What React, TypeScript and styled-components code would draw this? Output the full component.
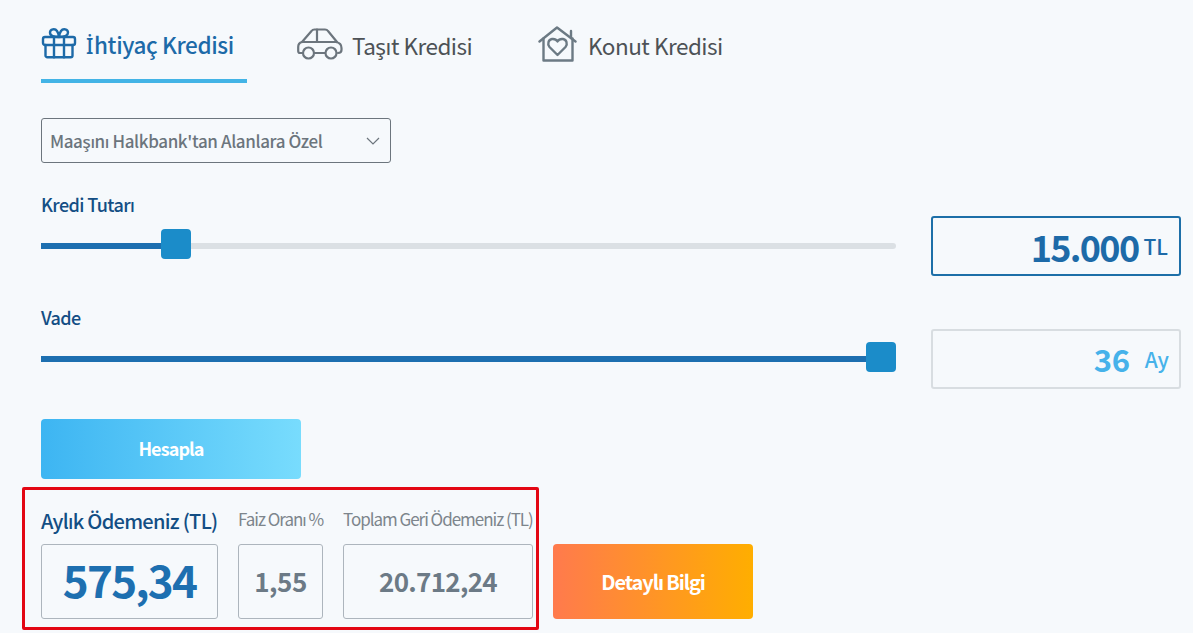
import React from "react";
import styled, { createGlobalStyle } from "styled-components";

const Global = createGlobalStyle`
  html, body { margin: 0; padding: 0; background: #f6f9fc; }
  body { font-family: "Noto Sans CJK SC", "Noto Sans", sans-serif; }
`;

const Page = styled.div`
  width: 1193px;
  height: 633px;
  box-sizing: border-box;
  padding-left: 41px;
  overflow: hidden;
`;

const Tabs = styled.nav`
  display: flex;
  height: 83px;
`;

const Tab = styled.div<{ $active?: boolean; $width: number; $inset?: number }>`
  display: flex;
  align-items: center;
  gap: 9px;
  box-sizing: border-box;
  width: ${(p) => p.$width}px;
  height: 83px;
  padding: 26px 0 15px ${(p) => p.$inset ?? 0}px;
  font-size: 22.500px;
  line-height: 30px;
  letter-spacing: ${(p) => (p.$active ? -0.4 : -0.5)}px;
  font-weight: ${(p) => (p.$active ? 500 : 400)};
  color: ${(p) => (p.$active ? "#1d6aa8" : "#4d5256")};
  border-bottom: 4px solid ${(p) => (p.$active ? "#43b4e6" : "transparent")};
`;

const TabLabel = styled.span`
  white-space: nowrap;
`;

const DottedCapital = styled.span`
  font-family: "Noto Sans", sans-serif;
  font-size: 21px;
  margin-right: 1px;
`;

const SelectBox = styled.div`
  display: flex;
  align-items: center;
  justify-content: space-between;
  box-sizing: border-box;
  width: 350px;
  height: 45px;
  margin-top: 35px;
  padding: 0 10px 0 8px;
  border: 1px solid #6c757d;
  border-radius: 3px;
  font-size: 17px;
  letter-spacing: -0.38px;
  font-weight: 500;
  color: #6c757d;
`;

const SliderRow = styled.section`
  display: grid;
  grid-template-columns: 855px 250px;
  column-gap: 35px;
  height: 81px;
  margin-top: 32px;
`;

const FieldLabel = styled.div`
  height: 20px;
  font-size: 18px;
  line-height: 18px;
  letter-spacing: -0.6px;
  font-weight: 500;
  color: #134e84;
`;

const Slider = styled.div`
  position: relative;
  height: 30px;
  margin-top: 14px;
`;

const Track = styled.div`
  position: absolute;
  left: 0;
  right: 0;
  top: 14px;
  height: 6px;
  border-radius: 3px;
  background: #dbe0e4;
`;

const Fill = styled.div`
  position: absolute;
  left: 0;
  top: 14px;
  height: 6px;
  background: #1d6fb0;
`;

const Thumb = styled.div`
  position: absolute;
  top: 0;
  width: 30px;
  height: 30px;
  border-radius: 4px;
  background: #1b8cc9;
`;

const ValueBox = styled.div<{ $active?: boolean }>`
  display: flex;
  align-items: center;
  justify-content: flex-end;
  box-sizing: border-box;
  height: 60px;
  align-self: end;
  padding-right: ${(p) => (p.$active ? 11 : 10)}px;
  border: 2px solid ${(p) => (p.$active ? "#1d6fa8" : "#d8dde1")};
  border-radius: 3px;
  color: ${(p) => (p.$active ? "#1d6aa8" : "#46b2ea")};
`;

const ValueNumber = styled.span<{ $gap: number; $size: number; $track: number }>`
  font-size: ${(p) => p.$size}px;
  line-height: 40px;
  letter-spacing: ${(p) => p.$track}px;
  font-weight: 700;
  margin-right: ${(p) => p.$gap}px;
`;

const ValueUnit = styled.span`
  font-size: 21px;
  line-height: 24px;
  font-weight: 500;
`;

const GradientButton = styled.div<{ $from: string; $to: string; $width: number; $height: number; $size: number; $track: number; $lift?: number }>`
  display: flex;
  align-items: center;
  justify-content: center;
  box-sizing: border-box;
  width: ${(p) => p.$width}px;
  height: ${(p) => p.$height}px;
  padding-bottom: ${(p) => p.$lift ?? 0}px;
  flex: none;
  border-radius: 4px;
  background: linear-gradient(90deg, ${(p) => p.$from}, ${(p) => p.$to});
  color: #fff;
  font-size: ${(p) => p.$size}px;
  letter-spacing: ${(p) => p.$track}px;
  font-weight: 700;
`;

const CalcWrap = styled.div`
  margin-top: 30px;
`;

const ResultRow = styled.section`
  display: flex;
  align-items: flex-end;
  gap: 14px;
  margin: 8px 0 0 -19px;
`;

const Highlight = styled.div`
  display: flex;
  gap: 20px;
  padding: 0 3px 8px 16px;
  border: 3px solid #e30613;
  border-radius: 2px;
`;

const ResultColumn = styled.div<{ $width: number }>`
  display: flex;
  flex-direction: column;
  width: ${(p) => p.$width}px;
`;

const ResultLabel = styled.div<{ $main?: boolean }>`
  height: 54px;
  padding-top: ${(p) => (p.$main ? 19 : 17)}px;
  box-sizing: border-box;
  white-space: nowrap;
  font-size: ${(p) => (p.$main ? 20 : 17)}px;
  line-height: 24px;
  font-weight: ${(p) => (p.$main ? 500 : 400)};
  letter-spacing: ${(p) => (p.$main ? -0.7 : -1.03)}px;
  color: ${(p) => (p.$main ? "#134e84" : "#7d858c")};
`;

const ResultBox = styled.div<{ $main?: boolean; $size: number; $track: number }>`
  display: flex;
  align-items: center;
  justify-content: center;
  box-sizing: border-box;
  height: 75px;
  padding-bottom: ${(p) => (p.$main ? 6 : 2)}px;
  border: 1px solid #adb5bd;
  border-radius: 3px;
  font-size: ${(p) => p.$size}px;
  letter-spacing: ${(p) => p.$track}px;
  font-weight: 700;
  color: ${(p) => (p.$main ? "#1d6fb0" : "#6c7a86")};
`;

const ButtonSlot = styled.div`
  margin-bottom: 11px;
`;

const GiftSvg = styled.svg`
  flex: none;
  margin-bottom: 4px;
`;

const CarSvg = styled.svg`
  flex: none;
`;

const HouseSvg = styled.svg`
  flex: none;
  margin: 0 2px 2px 0;
`;

const Gift = () => (
  <GiftSvg width="36" height="32" viewBox="0 0 36 32" fill="none" stroke="#1d6aa8" strokeWidth="2.4" strokeLinejoin="round" strokeLinecap="round">
    <rect x="2" y="10" width="32" height="8" rx="2" />
    <path d="M4.500 18v10.500a1.800 1.800 0 0 0 1.800 1.800h23.400a1.800 1.800 0 0 0 1.800-1.800V18" />
    <path d="M13 10v20.300M23 10v20.300" />
    <path d="M18 10C14 10 9 9.500 9 5.500 9 2 14 1 16 4c1.200 1.800 2 4 2 6zM18 10c4 0 9-.5 9-4.500C27 2 22 1 20 4c-1.200 1.800-2 4-2 6z" />
  </GiftSvg>
);

const Car = () => (
  <CarSvg width="46" height="34" viewBox="0 0 46 34" fill="none" stroke="#6c757d" strokeWidth="2.2" strokeLinejoin="round" strokeLinecap="round">
    <path d="M5 14 14.500 3Q15.500 1.500 17.500 1.500H28Q30 1.500 31 3L40 14" />
    <path d="M5.500 25H3Q1.200 25 1.200 23V19Q1.200 15 5 14H39Q44.500 15 44.500 20V22Q44.500 25 41 25" />
    <path d="M17 25H28M20 1.500V14" />
    <circle cx="11.500" cy="25" r="5.500" />
    <circle cx="34" cy="25" r="5.500" />
  </CarSvg>
);

const House = () => (
  <HouseSvg width="39" height="36" viewBox="0 0 39 36" fill="none" stroke="#6c7a84" strokeWidth="2.4" strokeLinejoin="round" strokeLinecap="round">
    <path d="M1.500 15.500 19 1.500 37.500 15.500" />
    <path d="M33 5v7" />
    <path d="M5.500 12.500v22h29v-22" />
    <path d="M19.500 29 11.500 21c-2.500-3-1-7.500 2.500-8 2.200-.3 4.300.5 5.500 2.500 1.200-2 3.300-2.800 5.500-2.500 3.500.5 5 5 2.500 8z" />
  </HouseSvg>
);

const Chevron = () => (
  <svg width="14" height="8" viewBox="0 0 14 8" fill="none" stroke="#6c757d" strokeWidth="1.2">
    <path d="M1 1l6 6 6-6" />
  </svg>
);

export default function App() {
  return (
    <Page>
      <Global />
      <Tabs>
        <Tab $active $width={206}><Gift /><TabLabel><DottedCapital>{"\u0130"}</DottedCapital>{"htiya\u00e7 Kredisi"}</TabLabel></Tab>
        <Tab $width={291} $inset={50}><Car />Taşıt Kredisi</Tab>
        <Tab $width={240}><House />Konut Kredisi</Tab>
      </Tabs>
      <SelectBox>Maaşını Halkbank'tan Alanlara Özel<Chevron /></SelectBox>
      <SliderRow>
        <div>
          <FieldLabel>Kredi Tutarı</FieldLabel>
          <Slider>
            <Track />
            <Fill style={{ width: 125 }} />
            <Thumb style={{ left: 120 }} />
          </Slider>
        </div>
        <ValueBox $active>
          <ValueNumber $gap={5} $size={36} $track={-1.7}>15.000</ValueNumber>
          <ValueUnit>TL</ValueUnit>
        </ValueBox>
      </SliderRow>
      <SliderRow>
        <div>
          <FieldLabel>Vade</FieldLabel>
          <Slider>
            <Track />
            <Fill style={{ width: 830 }} />
            <Thumb style={{ left: 825 }} />
          </Slider>
        </div>
        <ValueBox>
          <ValueNumber $gap={15} $size={31} $track={-0.3}>36</ValueNumber>
          <ValueUnit>Ay</ValueUnit>
        </ValueBox>
      </SliderRow>
      <CalcWrap>
        <GradientButton $from="#3db5f2" $to="#78dcfd" $width={260} $height={60} $size={18} $track={-0.9} $lift={3}>Hesapla</GradientButton>
      </CalcWrap>
      <ResultRow>
        <Highlight>
          <ResultColumn $width={177}>
            <ResultLabel $main>Aylık Ödemeniz (TL)</ResultLabel>
            <ResultBox $main $size={44} $track={-1.8}>575,34</ResultBox>
          </ResultColumn>
          <ResultColumn $width={85}>
            <ResultLabel>Faiz Oranı %</ResultLabel>
            <ResultBox $size={26} $track={-0.5}>1,55</ResultBox>
          </ResultColumn>
          <ResultColumn $width={190}>
            <ResultLabel>Toplam Geri Ödemeniz (TL)</ResultLabel>
            <ResultBox $size={26} $track={-0.7}>20.712,24</ResultBox>
          </ResultColumn>
        </Highlight>
        <ButtonSlot>
          <GradientButton $from="#ff7a4d" $to="#ffae00" $width={200} $height={75} $size={20} $track={-1.1}>Detaylı Bilgi</GradientButton>
        </ButtonSlot>
      </ResultRow>
    </Page>
  );
}
